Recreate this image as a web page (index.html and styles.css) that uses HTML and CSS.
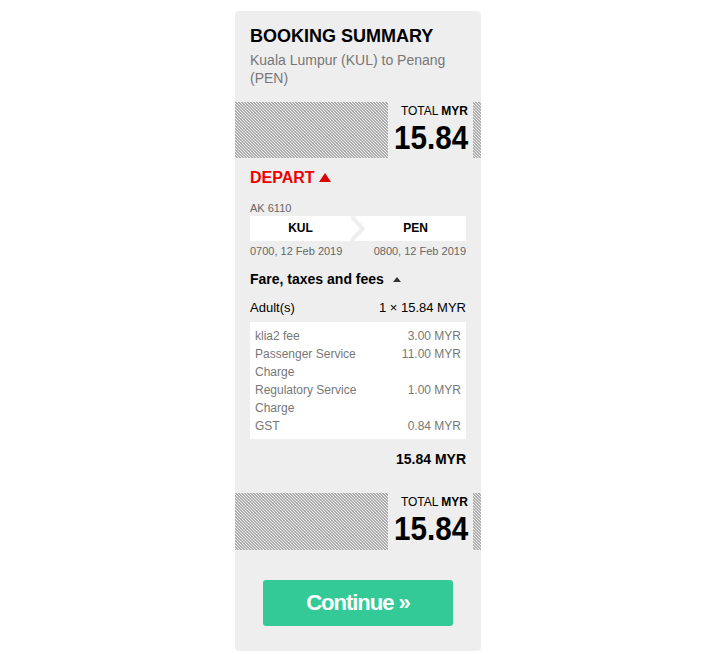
FILE: index.html
```html
<!DOCTYPE html>
<html>
<head>
<meta charset="utf-8">
<link rel="stylesheet" href="styles.css">
</head>
<body>
<div class="card">
  <div class="head">
    <h1 class="title">BOOKING SUMMARY</h1>
    <p class="route">Kuala Lumpur (KUL) to Penang (PEN)</p>
  </div>
  <div class="hatch">
    <div class="total">
      <div class="total-label">TOTAL <b>MYR</b></div>
      <div class="total-amount"><span>15.84</span></div>
    </div>
  </div>
  <div class="section">
    <div class="depart">DEPART <span class="tri-red"></span></div>
    <div class="flight-no">AK 6110</div>
    <div class="legs">
      <div class="leg leg-from">KUL</div>
      <svg class="chev" width="14" height="25" viewBox="0 0 14 25"><path d="M0 0 L12 12.5 L0 25" fill="none" stroke="#eeeeee" stroke-width="4"/></svg>
      <div class="leg leg-to">PEN</div>
    </div>
    <div class="times">
      <span>0700, 12 Feb 2019</span>
      <span>0800, 12 Feb 2019</span>
    </div>
    <div class="fare-head">Fare, taxes and fees <span class="tri-grey"></span></div>
    <div class="row adult"><span>Adult(s)</span><span>1 × 15.84 MYR</span></div>
    <div class="fees">
      <div class="fee"><span>klia2 fee</span><span>3.00 MYR</span></div>
      <div class="fee"><span class="fee-name">Passenger Service Charge</span><span>11.00 MYR</span></div>
      <div class="fee"><span class="fee-name">Regulatory Service Charge</span><span>1.00 MYR</span></div>
      <div class="fee"><span>GST</span><span>0.84 MYR</span></div>
    </div>
    <div class="subtotal">15.84 MYR</div>
  </div>
  <div class="hatch hatch-bottom">
    <div class="total">
      <div class="total-label">TOTAL <b>MYR</b></div>
      <div class="total-amount"><span>15.84</span></div>
    </div>
  </div>
  <div class="actions">
    <button class="continue">Continue »</button>
  </div>
</div>
</body>
</html>
```
FILE: styles.css
```css
* { box-sizing: border-box; }
body {
  margin: 0;
  background: #ffffff;
  font-family: "Liberation Sans", Arial, sans-serif;
}
.card {
  width: 246px;
  margin: 11px 0 0 235px;
  background: #eeeeee;
  border-radius: 4px;
  padding-bottom: 25px;
}
.head {
  padding: 14px 15px 15px 15px;
}
.title {
  margin: 0;
  font-size: 18px;
  line-height: 22px;
  font-weight: bold;
  color: #000;
}
.route {
  margin: 4px 0 0;
  font-size: 14px;
  line-height: 18px;
  color: #777777;
}
.hatch {
  height: 56px;
  display: flex;
  justify-content: flex-end;
  padding-right: 8px;
  background-color: #eeeeee;
  background-image: linear-gradient(45deg, #adadad 0 22%, #eeeeee 22% 50%, #adadad 50% 72%, #eeeeee 72% 100%);
  background-size: 3px 3px;
}
.total {
  width: 85px;
  background: #eeeeee;
  padding: 2px 5px 0 0;
}
.total-label {
  text-align: right;
  font-size: 12px;
  line-height: 14px;
  color: #000;
}
.total-amount {
  display: flex;
  justify-content: flex-end;
  font-size: 34px;
  line-height: 38px;
  font-weight: bold;
  color: #000;
}
.total-amount span {
  flex: none;
  transform: scaleX(0.87);
  transform-origin: right center;
}
.section {
  padding: 10px 15px 0;
}
.depart {
  font-size: 16px;
  line-height: 20px;
  font-weight: bold;
  color: #ee0000;
  display: flex;
  align-items: center;
  gap: 4px;
}
.tri-red {
  width: 0; height: 0;
  border-left: 6px solid transparent;
  border-right: 6px solid transparent;
  border-bottom: 9px solid #dd0000;
  margin-top: -2px;
}
.flight-no {
  margin-top: 13px;
  font-size: 11px;
  line-height: 14px;
  color: #666666;
}
.legs {
  display: flex;
  height: 25px;
  margin-top: 1px;
  background: #ffffff;
}
.leg {
  flex: 1;
  text-align: center;
  font-size: 12px;
  line-height: 25px;
  font-weight: bold;
  color: #000;
}
.chev { flex: none; }
.times {
  display: flex;
  justify-content: space-between;
  margin-top: 3px;
  font-size: 11px;
  line-height: 14px;
  color: #666666;
}
.fare-head {
  margin-top: 12px;
  font-size: 14px;
  line-height: 18px;
  font-weight: bold;
  color: #000;
  display: flex;
  align-items: center;
  gap: 9px;
}
.tri-grey {
  width: 0; height: 0;
  border-left: 4px solid transparent;
  border-right: 4px solid transparent;
  border-bottom: 5px solid #333333;
}
.row {
  display: flex;
  justify-content: space-between;
}
.adult {
  margin-top: 11px;
  font-size: 13px;
  line-height: 18px;
  color: #000;
}
.fees {
  margin-top: 5px;
  background: #ffffff;
  padding: 5px 5px 4px;
}
.fee {
  display: flex;
  justify-content: space-between;
  font-size: 12px;
  line-height: 18px;
  color: #777777;
}
.fee-name { width: 110px; }
.subtotal {
  margin-top: 11px;
  text-align: right;
  font-size: 14px;
  line-height: 18px;
  font-weight: bold;
  color: #000;
}
.hatch-bottom { margin-top: 25px; height: 57px; }
.actions {
  display: flex;
  justify-content: center;
  padding-top: 30px;
}
.continue {
  width: 190px;
  height: 46px;
  border: 0;
  border-radius: 3px;
  background: #34ca98;
  color: #ffffff;
  font-family: "Liberation Sans", Arial, sans-serif;
  font-size: 22px;
  font-weight: bold;
  letter-spacing: -1px;
  cursor: pointer;
}
```
